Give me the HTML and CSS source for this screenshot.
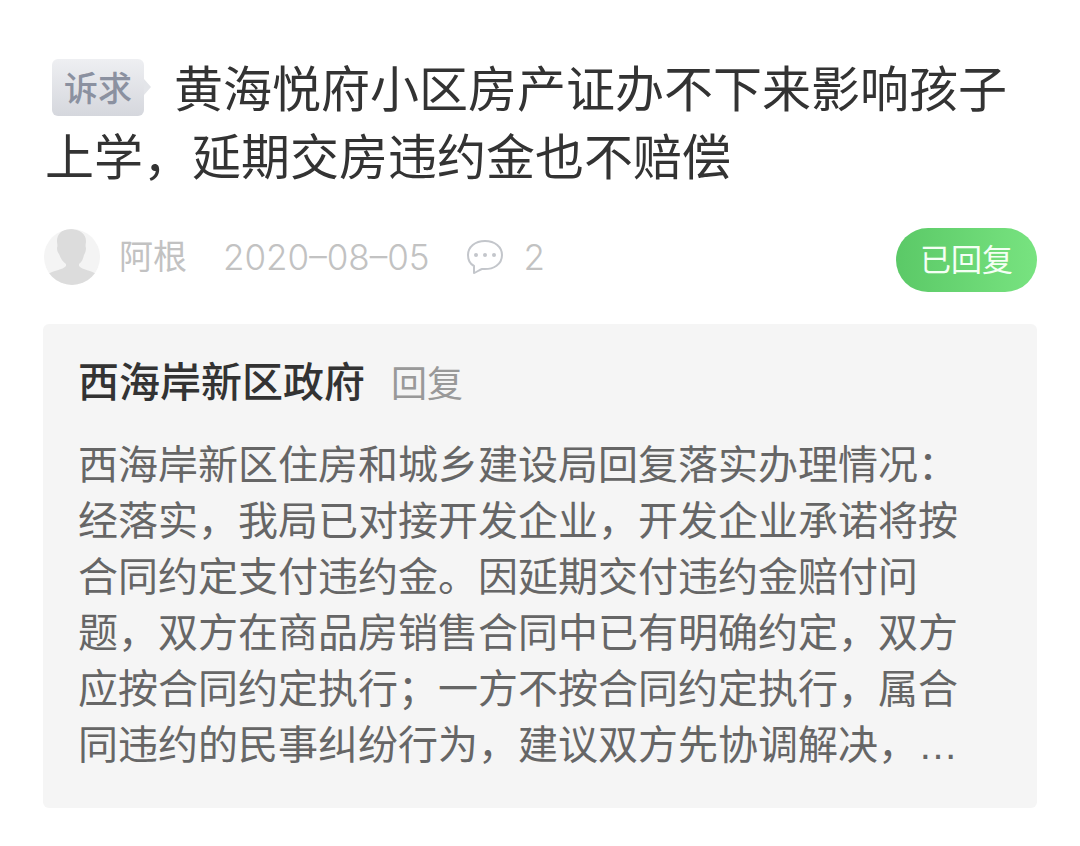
FILE: index.html
```html
<!DOCTYPE html>
<html lang="zh-CN">
<head>
<meta charset="utf-8">
<meta name="viewport" content="width=device-width, initial-scale=1">
<title>诉求详情</title>
<link rel="stylesheet" href="styles.css">
</head>
<body>
<article class="post">
  <h1 class="title"><span class="tag">诉求</span>黄海悦府小区房产证办不下来影响孩子上学，延期交房违约金也不赔偿</h1>
  <div class="meta">
    <div class="info">
      <svg class="avatar" viewBox="0 0 58 58" aria-hidden="true">
        <defs><clipPath id="face"><circle cx="29" cy="29" r="28"/></clipPath></defs>
        <circle cx="29" cy="29" r="28" fill="#f4f4f4"/>
        <g clip-path="url(#face)" fill="#dcdcdc">
          <path d="M27 1c-8 0-13 5-13 12 0 3 1 4 0 7 0 3 1 5 2 6 2 5 4 8 7 10v2c-3 4-13 4-19 9v12h50V47c-5-5-15-5-18-9v-2c3-2 4-5 5-9 1-2 2-4 2-7-1-3 0-4 0-7 0-7-6-12-16-12z"/>
        </g>
      </svg>
      <span class="author">阿根</span>
      <time class="date" datetime="2020-08-05">2020–08–05</time>
      <span class="comments">
        <svg class="bubble" viewBox="0 0 38 36" aria-hidden="true">
          <path d="M19 2C9 2 2 8 2 16c0 5 2 9 6 11v7c3-1 5-3 8-4 12 1 20-5 20-14 0-8-7-14-17-14z" fill="none" stroke="#c3c6cb" stroke-width="2" stroke-linejoin="round"/>
          <g fill="#c3c6cb"><circle cx="10" cy="16" r="2"/><circle cx="19" cy="16" r="2"/><circle cx="28" cy="16" r="2"/></g>
        </svg>
        <span>2</span>
      </span>
    </div>
    <span class="status">已回复</span>
  </div>
  <section class="reply">
    <h2 class="reply-head">西海岸新区政府<span class="reply-label">回复</span></h2>
    <p class="reply-text">西海岸新区住房和城乡建设局回复落实办理情况：<br>经落实，我局已对接开发企业，开发企业承诺将按合同约定支付违约金。因延期交付违约金赔付问题，双方在商品房销售合同中已有明确约定，双方应按合同约定执行；一方不按合同约定执行，属合同违约的民事纠纷行为，建议双方先协调解决，<span class="more">…</span></p>
  </section>
</article>
</body>
</html>
```
FILE: styles.css
```css
* { box-sizing: border-box; }
body {
  margin: 0;
  background: #fff;
  color: #333;
  font-family: "Noto Sans CJK SC", sans-serif;
}
.post { padding: 52px 43px 38px; }
.title {
  margin: 0;
  padding: 0 2px;
  font-size: 49px;
  line-height: 68px;
  font-weight: 400;
}
.tag {
  position: relative;
  display: inline-block;
  margin: 0 30px 0 7px;
  padding: 0 12px 2px;
  border-radius: 6px;
  background: linear-gradient(to bottom, #eeeff2, #d5d7dd);
  color: #8b91a0;
  font-size: 34px;
  line-height: 55px;
  font-weight: 500;
  vertical-align: 6px;
}
.tag::after {
  content: "";
  position: absolute;
  left: 100%;
  top: 20px;
  border: 8px solid transparent;
  border-left: 7px solid #e3e5e9;
  border-right: 0;
}
.meta {
  display: flex;
  align-items: flex-start;
  justify-content: space-between;
  margin-top: 40px;
  font-size: 34px;
}
.info {
  display: flex;
  align-items: center;
  color: #c2c2c2;
  line-height: 58px;
}
.avatar { width: 58px; height: 58px; }
.author { margin-left: 18px; line-height: 54px; padding-bottom: 4px; }
.date, .comments {
  font-family: Inter, sans-serif;
  font-size: 35px;
  font-weight: 300;
}
.date { margin-left: 36px; }
.comments {
  display: flex;
  align-items: center;
  gap: 20px;
  margin-left: 36px;
}
.bubble { width: 38px; height: 36px; }
.status {
  padding: 0 24px 4px;
  border-radius: 32px;
  background: linear-gradient(to right, #5bc967, #78e380);
  color: #f4fff4;
  font-size: 31px;
  line-height: 60px;
}
.reply {
  margin-top: 32px;
  padding: 25px 35px 35px;
  border-radius: 6px;
  background: #f5f5f5;
}
.reply-head {
  margin: 0;
  font-size: 41px;
  line-height: 60px;
  font-weight: 500;
}
.reply-label {
  margin-left: 26px;
  color: #999;
  font-size: 36px;
  font-weight: 400;
}
.reply-text {
  margin: 23px 0 0;
  padding-right: 35px;
  color: #666;
  font-size: 40px;
  line-height: 56px;
}
.more { font-family: "Liberation Sans", sans-serif; }
```
